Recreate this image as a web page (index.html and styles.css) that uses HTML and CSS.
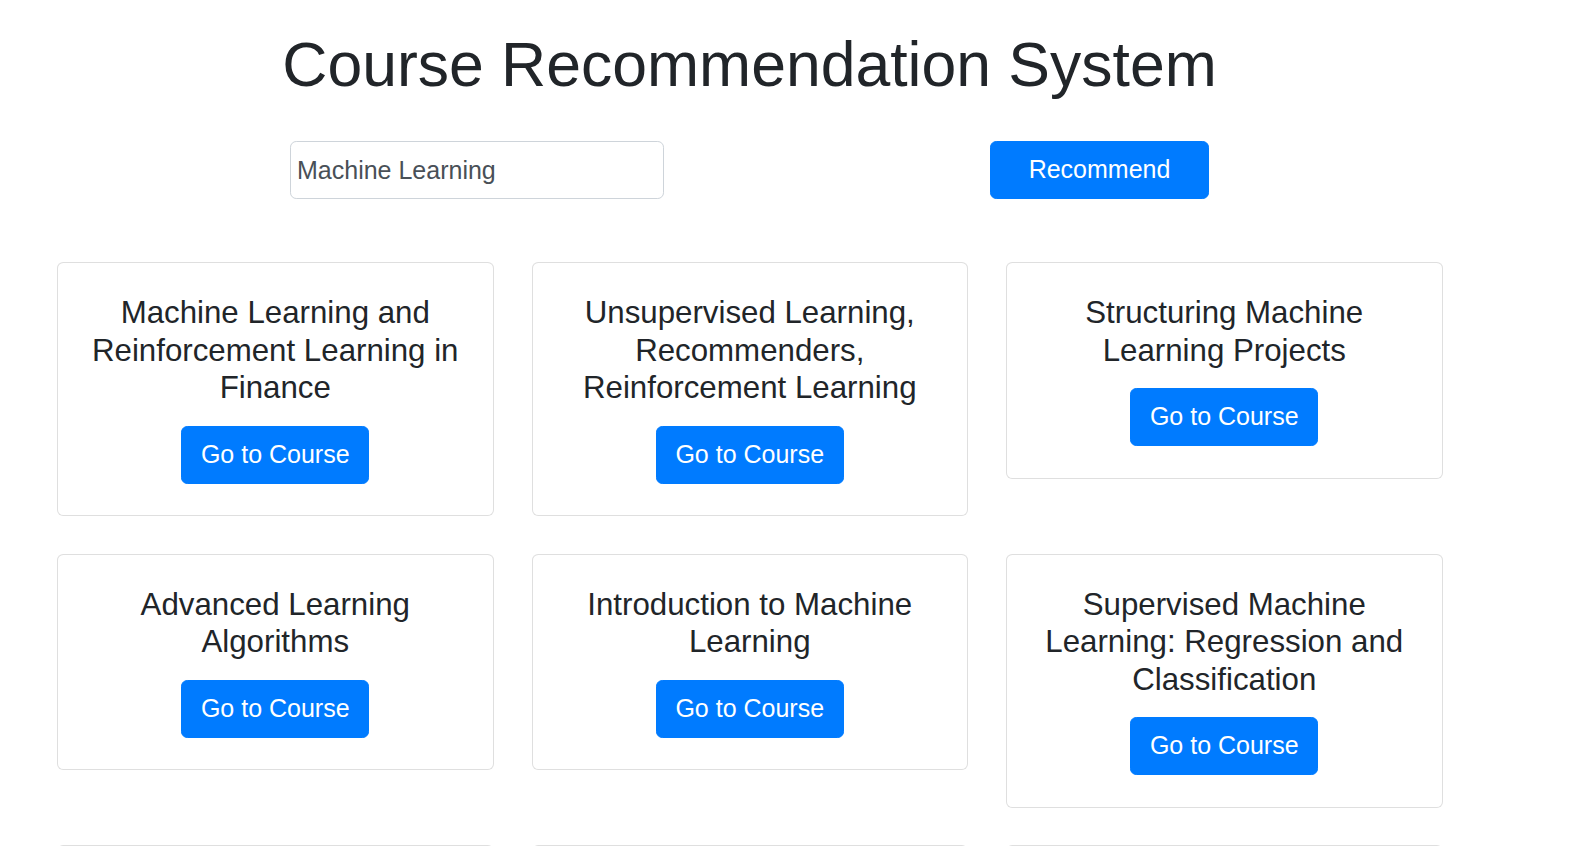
FILE: index.html
```html
<!DOCTYPE html>
<html lang="en">
<head>
<meta charset="utf-8">
<title>Course Recommendation System</title>
<link rel="stylesheet" href="styles.css">
</head>
<body>
<div class="page">
  <h1 class="heading">Course Recommendation System</h1>
  <form class="search" onsubmit="return false;">
    <input class="search-input" type="text" value="Machine Learning">
    <button class="btn btn-recommend" type="submit">Recommend</button>
  </form>
  <div class="cards">
    <div class="card">
      <h5 class="card-title">Machine Learning and Reinforcement Learning in Finance</h5>
      <a class="btn" href="#">Go to Course</a>
    </div>
    <div class="card">
      <h5 class="card-title">Unsupervised Learning, Recommenders, Reinforcement Learning</h5>
      <a class="btn" href="#">Go to Course</a>
    </div>
    <div class="card">
      <h5 class="card-title">Structuring Machine Learning Projects</h5>
      <a class="btn" href="#">Go to Course</a>
    </div>
    <div class="card">
      <h5 class="card-title">Advanced Learning Algorithms</h5>
      <a class="btn" href="#">Go to Course</a>
    </div>
    <div class="card">
      <h5 class="card-title">Introduction to Machine Learning</h5>
      <a class="btn" href="#">Go to Course</a>
    </div>
    <div class="card">
      <h5 class="card-title">Supervised Machine Learning: Regression and Classification</h5>
      <a class="btn" href="#">Go to Course</a>
    </div>
    <div class="card">
      <h5 class="card-title">Machine Learning Foundations</h5>
      <a class="btn" href="#">Go to Course</a>
    </div>
    <div class="card">
      <h5 class="card-title">Applied Machine Learning in Python</h5>
      <a class="btn" href="#">Go to Course</a>
    </div>
    <div class="card">
      <h5 class="card-title">Machine Learning with Python</h5>
      <a class="btn" href="#">Go to Course</a>
    </div>
  </div>
</div>
</body>
</html>
```
FILE: styles.css
```css
html, body {
  margin: 0;
  padding: 0;
  background: #fff;
  overflow: hidden;
}
body {
  font-family: "Liberation Sans", Arial, sans-serif;
  color: #212529;
}
.page {
  width: 1499px;
}
.heading {
  margin: 0;
  padding-top: 27px;
  font-size: 62.5px;
  line-height: 75px;
  font-weight: 400;
  text-align: center;
  color: #212529;
}
.search {
  margin: 39px 0 0;
  padding: 0 127px;
  display: flex;
  justify-content: space-around;
  align-items: center;
}
.search-input {
  box-sizing: border-box;
  width: 374px;
  height: 58px;
  padding: 0 12px 0 6px;
  border: 1px solid #ced4da;
  border-radius: 6.25px;
  font-family: "Liberation Sans", Arial, sans-serif;
  font-size: 25px;
  color: #495057;
  background: #fff;
  outline: none;
}
.btn {
  display: inline-block;
  box-sizing: border-box;
  font-family: "Liberation Sans", Arial, sans-serif;
  font-size: 25px;
  line-height: 37.5px;
  padding: 9.375px 18.75px;
  border: 1px solid #007bff;
  border-radius: 6.25px;
  background: #007bff;
  color: #fff;
  text-decoration: none;
  cursor: pointer;
}
.btn-recommend {
  height: 58px;
  padding: 0 37.5px;
  width: 219px;
}
.cards {
  margin-top: 63px;
  padding: 0 57px;
  display: grid;
  grid-template-columns: repeat(3, 436.5px);
  column-gap: 38px;
  row-gap: 37.5px;
  align-items: start;
}
.card {
  border: 1px solid rgba(0, 0, 0, 0.125);
  border-radius: 6.25px;
  padding: 31.25px;
  text-align: center;
  background: #fff;
}
.card-title {
  margin: 0 0 18.75px;
  font-size: 31.25px;
  line-height: 37.5px;
  font-weight: 400;
  color: #212529;
}
```
